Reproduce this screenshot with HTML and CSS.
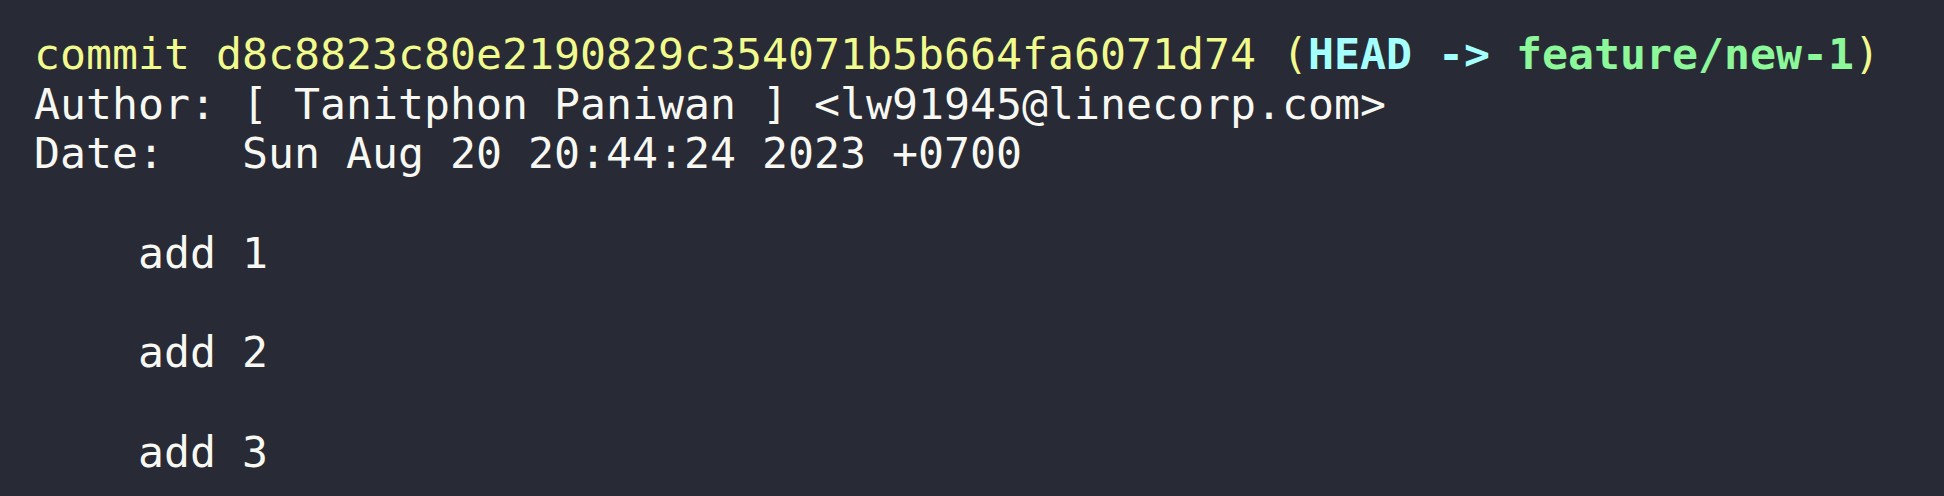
FILE: index.html
```html
<!DOCTYPE html>
<html>
<head>
<meta charset="utf-8">
<link rel="stylesheet" href="styles.css">
</head>
<body>
<pre class="term"><span class="yellow">commit d8c8823c80e2190829c354071b5b664fa6071d74 (<span class="cyan">HEAD -&gt; </span><span class="green">feature/new-1</span>)</span>
Author: [ Tanitphon Paniwan ] &lt;lw91945@linecorp.com&gt;
Date:   Sun Aug 20 20:44:24 2023 +0700

    add 1

    add 2

    add 3</pre>
</body>
</html>
```

FILE: styles.css
```css
html, body {
  margin: 0;
  padding: 0;
  background: #282a36;
}
body {
  width: 1944px;
  height: 496px;
  overflow: hidden;
}
.term {
  margin: 0;
  padding: 30px 0 0 34px;
  font-family: "DejaVu Sans Mono", monospace;
  font-size: 43.2px;
  line-height: 49.7px;
  color: #f8f8f2;
  white-space: pre;
}
.yellow { color: #f1fa8c; }
.cyan { color: #a4ffff; font-weight: bold; }
.green { color: #8cf89a; font-weight: bold; }
```
